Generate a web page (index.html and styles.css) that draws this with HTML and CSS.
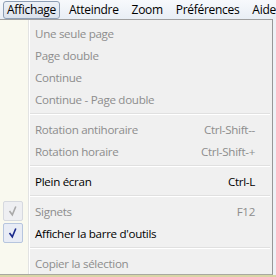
FILE: index.html
```html
<!DOCTYPE html>
<html lang="fr">
<head>
  <meta charset="UTF-8">
  <title>Affichage</title>
  <link rel="stylesheet" href="styles.css">
</head>
<body>
  <div class="menubar">
    <span class="menubar-item active">Affichage</span>
    <span class="menubar-item">Atteindre</span>
    <span class="menubar-item">Zoom</span>
    <span class="menubar-item">Préférences</span>
    <span class="menubar-item">Aide</span>
  </div>

  <div class="menu">
    <div class="item disabled"><span class="gutter"></span><span class="label">Une seule page</span></div>
    <div class="item disabled"><span class="gutter"></span><span class="label">Page double</span></div>
    <div class="item disabled"><span class="gutter"></span><span class="label">Continue</span></div>
    <div class="item disabled"><span class="gutter"></span><span class="label">Continue - Page double</span></div>
    <div class="sep"></div>
    <div class="item disabled"><span class="gutter"></span><span class="label">Rotation antihoraire</span><span class="key">Ctrl-Shift--</span></div>
    <div class="item disabled"><span class="gutter"></span><span class="label">Rotation horaire</span><span class="key">Ctrl-Shift-+</span></div>
    <div class="sep"></div>
    <div class="item"><span class="gutter"></span><span class="label">Plein écran</span><span class="key">Ctrl-L</span></div>
    <div class="sep"></div>
    <div class="item disabled">
      <span class="gutter">
        <span class="check"><svg width="18" height="18" viewBox="0 0 18 18"><path d="M5.5 9 L8.3 12.8 L11.8 4.5" fill="none" stroke="currentColor" stroke-width="1.6"/></svg></span>
      </span>
      <span class="label">Signets</span><span class="key">F12</span>
    </div>
    <div class="item">
      <span class="gutter">
        <span class="check"><svg width="18" height="18" viewBox="0 0 18 18"><path d="M5.5 9 L8.3 12.8 L11.8 4.5" fill="none" stroke="currentColor" stroke-width="1.6"/></svg></span>
      </span>
      <span class="label">Afficher la barre d'outils</span>
    </div>
    <div class="sep"></div>
    <div class="item disabled"><span class="gutter"></span><span class="label">Copier la sélection</span></div>
  </div>
</body>
</html>
```

FILE: styles.css
```css
* {
  box-sizing: border-box;
  margin: 0;
  padding: 0;
}

body {
  width: 276px;
  height: 277px;
  overflow: hidden;
  font-family: 'Open Sans', 'Noto Sans', sans-serif;
  font-size: 11.6px;
  letter-spacing: -0.3px;
  color: #000;
  background: #d9d5a6;
}

.menubar {
  display: flex;
  align-items: center;
  height: 19px;
  padding-left: 3px;
  font-size: 12px;
  background: linear-gradient(#f7f9fc, #e9eef5);
  white-space: nowrap;
  overflow: hidden;
}

.menubar-item {
  flex-shrink: 0;
  height: 18px;
  line-height: 16px;
  padding: 0 3px;
  margin-right: 5px;
  border: 1px solid transparent;
  border-radius: 3px;
}

.menubar-item.active {
  border-color: #8e9fb5;
  background: linear-gradient(#edf1f6, #dbe2ec);
}

.menu {
  width: 273px;
  height: 256px;
  padding-top: 2px;
  border-top: 1px solid #a0a0a0;
  border-right: 1px solid #979797;
  border-bottom: 1px solid #a8a8a0;
  background: linear-gradient(to right, #f9f9ef 0 28px, #e2e3e3 28px 29px, #ffffff 29px 30px, #f0f0f0 30px);
  box-shadow: 3px 0 0 #eef1f6;
}

.item {
  display: flex;
  align-items: center;
  height: 22px;
  padding-right: 17px;
}

.item.disabled {
  color: #8d8d8d;
}

.gutter {
  display: flex;
  align-items: center;
  width: 35px;
  height: 22px;
  padding-left: 3px;
}

.check {
  display: flex;
  align-items: center;
  justify-content: center;
  width: 20px;
  height: 20px;
  border: 1px solid #b6c5de;
  border-radius: 2px;
  background: #e8ecf5;
  color: #1a2a8c;
}

.item.disabled .check {
  color: #a9a9a9;
  border-color: #d6d9df;
  background: #eeeff2;
}

.label {
  flex: 1;
  white-space: nowrap;
}

.key {
  white-space: nowrap;
}

.sep {
  margin: 3px 2px 3px 30px;
  border-top: 1px solid #e0e0e0;
  border-bottom: 1px solid #ffffff;
}
```
